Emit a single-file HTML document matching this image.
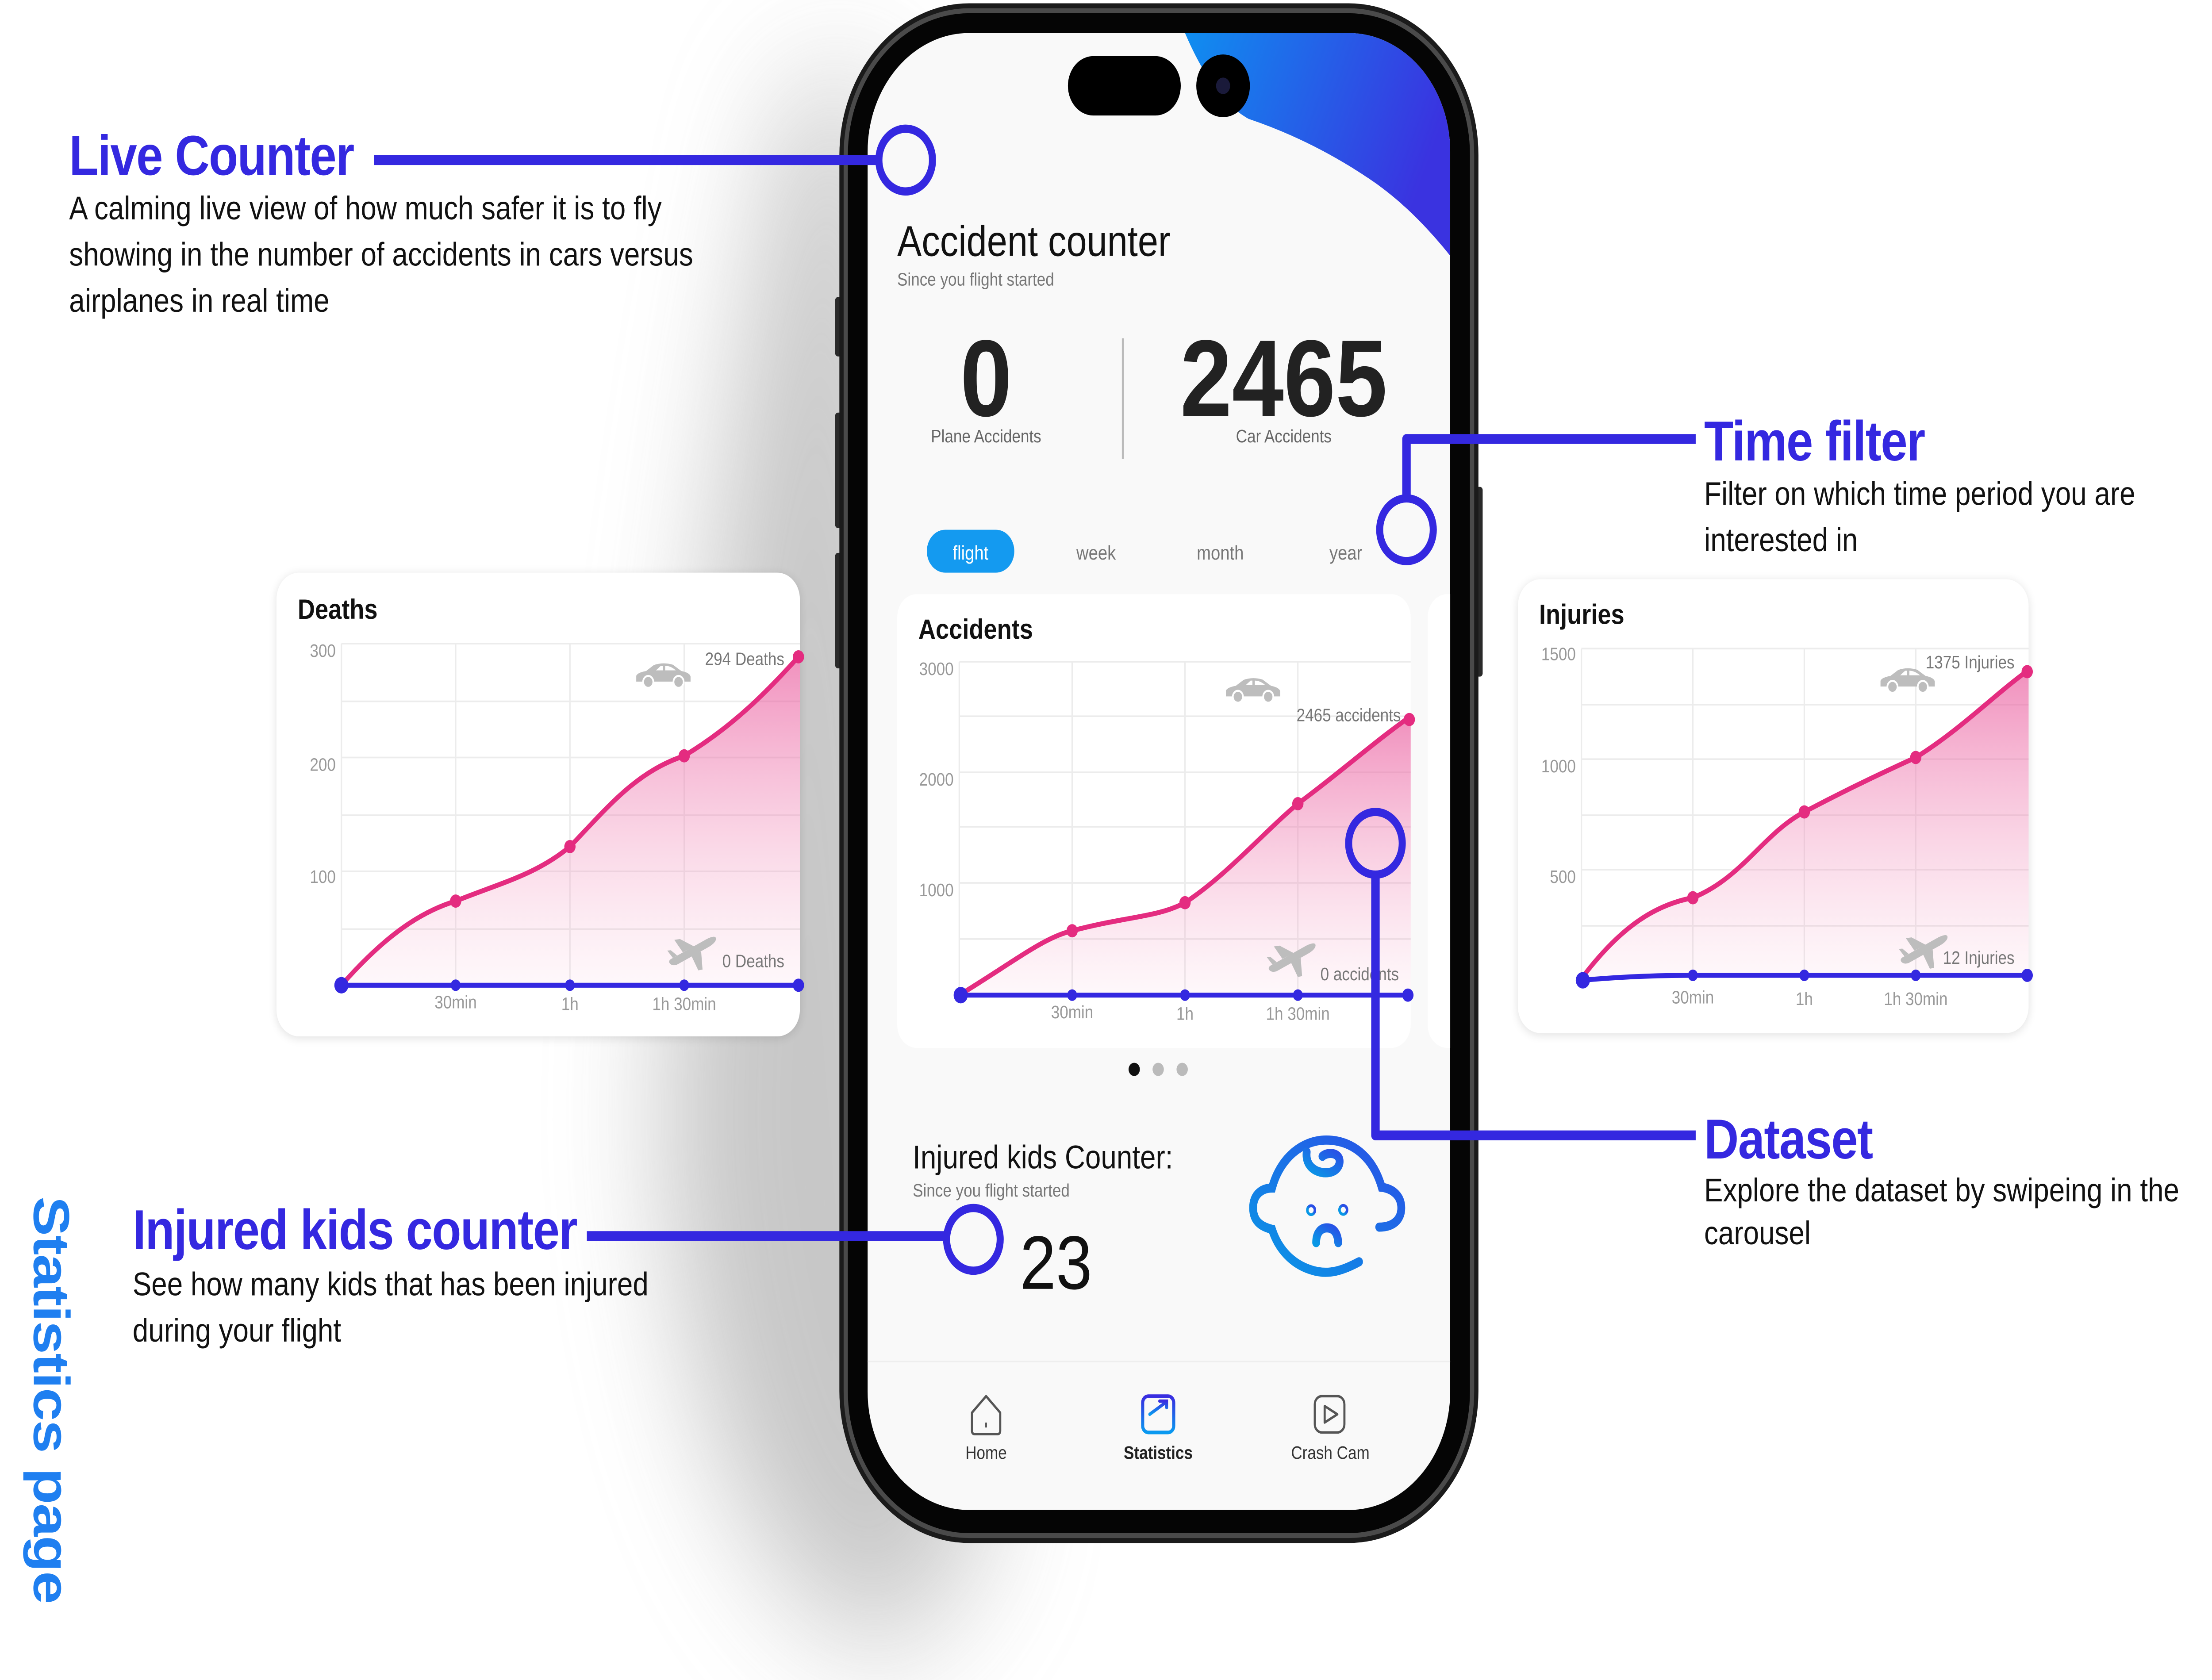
<!DOCTYPE html>
<html><head><meta charset="utf-8"><style>
html,body{margin:0;padding:0;background:#fff;width:100%;height:100%;overflow:hidden;}
svg{display:block;width:100vw;height:100vh;}
text{font-family:"Liberation Sans",sans-serif;}
</style></head><body>
<svg viewBox="0 0 1568 1018" preserveAspectRatio="none" xmlns="http://www.w3.org/2000/svg">
<defs>
  <linearGradient id="pink" x1="0" y1="0" x2="0" y2="1">
    <stop offset="0" stop-color="#e9559a" stop-opacity="0.65"/>
    <stop offset="1" stop-color="#f5a8c8" stop-opacity="0.08"/>
  </linearGradient>
  <linearGradient id="wave" x1="0" y1="0" x2="1" y2="0.3">
    <stop offset="0" stop-color="#0f8ef0"/>
    <stop offset="1" stop-color="#3a33e0"/>
  </linearGradient>
  <linearGradient id="baby" x1="1" y1="0" x2="0" y2="1">
    <stop offset="0" stop-color="#2a4fe6"/>
    <stop offset="1" stop-color="#0998e6"/>
  </linearGradient>
  <linearGradient id="stat" x1="0" y1="0" x2="0" y2="1">
    <stop offset="0" stop-color="#3a2de0"/>
    <stop offset="1" stop-color="#0a9af0"/>
  </linearGradient>
  <filter id="sh" x="-20%" y="-20%" width="140%" height="140%"><feGaussianBlur stdDeviation="3"/></filter>
  <filter id="bigsh" x="-50%" y="-20%" width="200%" height="140%"><feGaussianBlur stdDeviation="40"/></filter>
  <clipPath id="scr"><rect x="615" y="20" width="413" height="895" rx="72"/></clipPath>
  <g id="car">
    <path d="M1 12 L1 8.5 Q2 6.5 8 5.6 L13.5 2 Q20 0 27 1.8 L33 5.6 Q39 6.6 39.5 9 L39.5 12 Z" fill="#bdbdbd"/>
    <path d="M15 5.2 L18.5 2.4 L19.8 2.4 L19.8 5.2 Z M21.5 2.4 Q25.5 2.5 29 5.2 L21.5 5.2 Z" fill="#fff"/>
    <circle cx="9.5" cy="12.2" r="3.6" fill="#bdbdbd" stroke="#fff" stroke-width="1.2"/>
    <circle cx="31" cy="12.2" r="3.6" fill="#bdbdbd" stroke="#fff" stroke-width="1.2"/>
  </g>
  <g id="plane" fill="#bdbdbd">
    <path d="M3 21 Q1 19 5 17.5 L29 6 Q35 3.5 35.5 5.5 Q36 8 30 11 L8 21.5 Q5 22.5 3 21 Z"/>
    <path d="M12 14 L6 6.5 L10 6 L20 10.5 Z"/>
    <path d="M18 16 L23 25 L26 24.5 L25 13.5 Z"/>
    <path d="M5 17.5 L1 13 L3.5 12.8 L8 16 Z"/>
  </g>
</defs>

<path d="M560 60 Q480 400 470 700 Q500 980 640 1000 L700 930 L620 40 Z" fill="#9a9a9a" opacity="0.55" filter="url(#bigsh)"/>

<rect x="592" y="180" width="6" height="36" rx="2" fill="#2a2a2a"/>
<rect x="592" y="250" width="6" height="70" rx="2" fill="#2a2a2a"/>
<rect x="592" y="335" width="6" height="70" rx="2" fill="#2a2a2a"/>
<rect x="1045" y="295" width="6" height="115" rx="2" fill="#2a2a2a"/>
<rect x="595" y="2" width="453" height="933" rx="92" fill="#1b1b1b"/>
<rect x="598" y="5" width="447" height="927" rx="89" fill="#4a4a4a"/>
<rect x="601" y="8" width="441" height="921" rx="86" fill="#050505"/>

<g clip-path="url(#scr)">
  <rect x="615" y="20" width="413" height="895" fill="#f9f9f9"/>
  <path d="M840 20 Q860 60 885 72 Q930 85 970 108 Q1000 125 1028 155 L1028 20 Z" fill="url(#wave)"/>
</g>
<rect x="757" y="34" width="80" height="36" rx="18" fill="#000"/>
<circle cx="867" cy="52" r="19" fill="#000"/>
<circle cx="867" cy="52" r="5" fill="#1a1a3a"/>

<text x="636" y="155" font-size="26" fill="#111">Accident counter</text>
<text x="636" y="173" font-size="11" fill="#777">Since you flight started</text>
<text x="699" y="252" font-size="66" font-weight="bold" fill="#222" text-anchor="middle">0</text>
<text x="699" y="268" font-size="11" fill="#666" text-anchor="middle">Plane Accidents</text>
<line x1="796" y1="205" x2="796" y2="278" stroke="#bbb" stroke-width="1.5"/>
<text x="910" y="252" font-size="66" font-weight="bold" fill="#222" text-anchor="middle">2465</text>
<text x="910" y="268" font-size="11" fill="#666" text-anchor="middle">Car Accidents</text>

<rect x="657" y="321" width="62" height="26" rx="13" fill="#149af0"/>
<text x="688" y="339" font-size="12" fill="#fff" text-anchor="middle">flight</text>
<text x="777" y="339" font-size="12" fill="#777" text-anchor="middle">week</text>
<text x="865" y="339" font-size="12" fill="#777" text-anchor="middle">month</text>
<text x="954" y="339" font-size="12" fill="#777" text-anchor="middle">year</text>

<rect x="1012" y="360" width="30" height="275" rx="14" fill="#fff" clip-path="url(#scr)"/>
<rect x="636" y="360" width="364" height="275" rx="14" fill="#fff"/>
<text x="651" y="387" font-size="17" font-weight="bold" fill="#111">Accidents</text>
<g stroke="#ececec" stroke-width="1">
  <line x1="680" y1="401" x2="1000" y2="401"/><line x1="680" y1="434" x2="1000" y2="434"/>
  <line x1="680" y1="468" x2="1000" y2="468"/><line x1="680" y1="501" x2="1000" y2="501"/>
  <line x1="680" y1="535" x2="1000" y2="535"/><line x1="680" y1="569" x2="1000" y2="569"/>
  <line x1="680" y1="401" x2="680" y2="603"/><line x1="760" y1="401" x2="760" y2="603"/>
  <line x1="840" y1="401" x2="840" y2="603"/><line x1="920" y1="401" x2="920" y2="603"/>
</g>
<g font-size="11" fill="#999" text-anchor="end">
  <text x="676" y="409">3000</text><text x="676" y="476">2000</text><text x="676" y="543">1000</text>
</g>
<path d="M680 603 C720 582 740 568 760 564 C800 555 820 556 840 547 C870 530 895 505 920 487 C950 468 975 449 1000 434 L1000 603 Z" fill="url(#pink)"/>
<path d="M680 603 C720 582 740 568 760 564 C800 555 820 556 840 547 C870 530 895 505 920 487 C950 468 975 449 1000 434" fill="none" stroke="#e42c80" stroke-width="3"/>
<g fill="#e42c80"><circle cx="760" cy="564" r="4"/><circle cx="840" cy="547" r="4"/><circle cx="920" cy="487" r="4"/><circle cx="999" cy="436" r="4"/></g>
<line x1="680" y1="603" x2="1000" y2="603" stroke="#3428e0" stroke-width="3"/>
<g fill="#3428e0"><circle cx="681" cy="603" r="5"/><circle cx="760" cy="603" r="3.5"/><circle cx="840" cy="603" r="3.5"/><circle cx="920" cy="603" r="3.5"/><circle cx="998" cy="603" r="4"/></g>
<g font-size="11" fill="#999" text-anchor="middle"><text x="760" y="617">30min</text><text x="840" y="618">1h</text><text x="920" y="618">1h 30min</text></g>
<use href="#car" x="868" y="410"/>
<text x="993" y="437" font-size="11" fill="#777" text-anchor="end">2465 accidents</text>
<use href="#plane" x="897" y="567"/>
<text x="936" y="594" font-size="11" fill="#777">0 accidents</text>

<circle cx="804" cy="648" r="4" fill="#111"/><circle cx="821" cy="648" r="4" fill="#bbb"/><circle cx="838" cy="648" r="4" fill="#bbb"/>

<text x="647" y="708" font-size="20" fill="#111">Injured kids Counter:</text>
<text x="647" y="725" font-size="11" fill="#777">Since you flight started</text>
<text x="723" y="781" font-size="46" fill="#111">23</text>

<g transform="translate(884.7 681) scale(0.0894)" fill="none" stroke="url(#baby)" stroke-width="62" stroke-linecap="round">
  <path d="M880 935 C760 990 640 1030 500 990 C350 950 240 850 190 715 C120 700 40 670 40 570 C40 470 120 435 190 435 C250 240 420 110 620 110 C820 110 990 220 1060 430 C1150 440 1215 490 1215 570 C1215 650 1150 700 1040 700"/>
  <path d="M465 190 C450 300 560 340 640 330 C710 320 740 270 720 230 C695 190 620 195 590 220"/>
  <path d="M540 805 C540 730 585 705 625 705 C670 705 710 730 715 805"/>
  <circle cx="500" cy="585" r="10" stroke-width="60"/><circle cx="755" cy="583" r="10" stroke-width="60"/>
</g>

<line x1="615" y1="825" x2="1028" y2="825" stroke="#eee" stroke-width="1"/>
<path d="M689 856 L699 846 L709 856 L709 867 Q709 869 707 869 L691 869 Q689 869 689 867 Z" fill="none" stroke="#555" stroke-width="1.5" stroke-linejoin="round"/>
<line x1="699" y1="862" x2="699" y2="865" stroke="#555" stroke-width="1.2"/>
<rect x="810" y="846" width="22" height="22" rx="4" fill="none" stroke="url(#stat)" stroke-width="2.2"/>
<g stroke="url(#stat)" stroke-width="2" fill="none" stroke-linecap="round">
  <line x1="815" y1="864" x2="815" y2="861"/><line x1="819" y1="864" x2="819" y2="858"/><line x1="823" y1="864" x2="823" y2="856"/><line x1="827" y1="864" x2="827" y2="853"/>
  <path d="M815 857 L826 850 M822 849 L827 849 L827 853"/>
</g>
<rect x="932" y="846" width="21" height="22" rx="5" fill="none" stroke="#555" stroke-width="1.5"/>
<path d="M939 852 L948 857 L939 862 Z" fill="none" stroke="#555" stroke-width="1.5" stroke-linejoin="round"/>
<text x="699" y="884" font-size="11" fill="#333" text-anchor="middle">Home</text>
<text x="821" y="884" font-size="11" font-weight="bold" fill="#222" text-anchor="middle">Statistics</text>
<text x="943" y="884" font-size="11" fill="#333" text-anchor="middle">Crash Cam</text>

<rect x="196" y="348" width="371" height="281" rx="16" fill="#000" opacity="0.12" filter="url(#sh)"/>
<rect x="196" y="347" width="371" height="281" rx="16" fill="#fff"/>
<text x="211" y="375" font-size="17" font-weight="bold" fill="#111">Deaths</text>
<g stroke="#ececec" stroke-width="1">
  <line x1="242" y1="390" x2="567" y2="390"/><line x1="242" y1="425" x2="567" y2="425"/>
  <line x1="242" y1="459" x2="567" y2="459"/><line x1="242" y1="494" x2="567" y2="494"/>
  <line x1="242" y1="528" x2="567" y2="528"/><line x1="242" y1="563" x2="567" y2="563"/>
  <line x1="242" y1="390" x2="242" y2="597"/><line x1="323" y1="390" x2="323" y2="597"/>
  <line x1="404" y1="390" x2="404" y2="597"/><line x1="485" y1="390" x2="485" y2="597"/>
</g>
<g font-size="11" fill="#999" text-anchor="end"><text x="238" y="398">300</text><text x="238" y="467">200</text><text x="238" y="535">100</text></g>
<path d="M242 597 C275 565 300 552 323 546 C355 535 380 530 404 513 C430 490 450 468 485 458 C520 440 545 418 567 397 L567 597 Z" fill="url(#pink)"/>
<path d="M242 597 C275 565 300 552 323 546 C355 535 380 530 404 513 C430 490 450 468 485 458 C520 440 545 418 567 397" fill="none" stroke="#e42c80" stroke-width="3"/>
<g fill="#e42c80"><circle cx="323" cy="546" r="4"/><circle cx="404" cy="513" r="4"/><circle cx="485" cy="458" r="4"/><circle cx="566" cy="398" r="4"/></g>
<line x1="242" y1="597" x2="567" y2="597" stroke="#3428e0" stroke-width="3"/>
<g fill="#3428e0"><circle cx="242" cy="597" r="5"/><circle cx="323" cy="597" r="3.5"/><circle cx="404" cy="597" r="3.5"/><circle cx="485" cy="597" r="3.5"/><circle cx="566" cy="597" r="4"/></g>
<g font-size="11" fill="#999" text-anchor="middle"><text x="323" y="611">30min</text><text x="404" y="612">1h</text><text x="485" y="612">1h 30min</text></g>
<use href="#car" x="450" y="401"/>
<text x="556" y="403" font-size="11" fill="#777" text-anchor="end">294 Deaths</text>
<use href="#plane" x="472" y="563"/>
<text x="556" y="586" font-size="11" fill="#777" text-anchor="end">0 Deaths</text>

<rect x="1076" y="352" width="362" height="275" rx="16" fill="#000" opacity="0.12" filter="url(#sh)"/>
<rect x="1076" y="351" width="362" height="275" rx="16" fill="#fff"/>
<text x="1091" y="378" font-size="17" font-weight="bold" fill="#111">Injuries</text>
<g stroke="#ececec" stroke-width="1">
  <line x1="1121" y1="393" x2="1438" y2="393"/><line x1="1121" y1="427" x2="1438" y2="427"/>
  <line x1="1121" y1="460" x2="1438" y2="460"/><line x1="1121" y1="494" x2="1438" y2="494"/>
  <line x1="1121" y1="527" x2="1438" y2="527"/><line x1="1121" y1="561" x2="1438" y2="561"/>
  <line x1="1121" y1="393" x2="1121" y2="594"/><line x1="1200" y1="393" x2="1200" y2="594"/>
  <line x1="1279" y1="393" x2="1279" y2="594"/><line x1="1358" y1="393" x2="1358" y2="594"/>
</g>
<g font-size="11" fill="#999" text-anchor="end"><text x="1117" y="400">1500</text><text x="1117" y="468">1000</text><text x="1117" y="535">500</text></g>
<path d="M1121 593 C1150 560 1175 548 1200 544 C1235 532 1250 505 1279 492 C1310 478 1335 468 1358 459 C1390 442 1415 420 1438 406 L1438 592 Z" fill="url(#pink)"/>
<path d="M1121 593 C1150 560 1175 548 1200 544 C1235 532 1250 505 1279 492 C1310 478 1335 468 1358 459 C1390 442 1415 420 1438 406" fill="none" stroke="#e42c80" stroke-width="3"/>
<g fill="#e42c80"><circle cx="1200" cy="544" r="4"/><circle cx="1279" cy="492" r="4"/><circle cx="1358" cy="459" r="4"/><circle cx="1437" cy="407" r="4"/></g>
<path d="M1121 594 Q1160 591 1200 591 L1438 591" fill="none" stroke="#3428e0" stroke-width="3"/>
<g fill="#3428e0"><circle cx="1122" cy="594" r="5"/><circle cx="1200" cy="591" r="3.5"/><circle cx="1279" cy="591" r="3.5"/><circle cx="1358" cy="591" r="3.5"/><circle cx="1437" cy="591" r="4"/></g>
<g font-size="11" fill="#999" text-anchor="middle"><text x="1200" y="608">30min</text><text x="1279" y="609">1h</text><text x="1358" y="609">1h 30min</text></g>
<use href="#car" x="1332" y="404"/>
<text x="1428" y="405" font-size="11" fill="#777" text-anchor="end">1375 Injuries</text>
<use href="#plane" x="1345" y="562"/>
<text x="1428" y="584" font-size="11" fill="#777" text-anchor="end">12 Injuries</text>

<g stroke="#3428e0" stroke-width="6" fill="none" stroke-linejoin="round">
  <line x1="265" y1="97" x2="622" y2="97"/>
  <path d="M1202 266 L997 266 L997 301"/>
  <path d="M1202 688 L975 688 L975 531"/>
  <line x1="416" y1="749" x2="671" y2="749"/>
</g>
<g stroke="#3428e0" stroke-width="5" fill="none">
  <circle cx="642" cy="97" r="19"/>
  <circle cx="997" cy="321" r="19"/>
  <circle cx="975" cy="511" r="19"/>
  <circle cx="690" cy="751" r="19"/>
</g>

<g fill="#3428e0" font-weight="bold" font-size="34">
  <text x="49" y="106" letter-spacing="-0.5">Live Counter</text>
  <text x="1208" y="279" letter-spacing="-0.5">Time filter</text>
  <text x="1208" y="702" letter-spacing="-0.5">Dataset</text>
  <text x="94" y="757" letter-spacing="-0.5">Injured kids counter</text>
</g>
<g fill="#111" font-size="20">
  <text x="49" y="133">A calming live view of how much safer it is to fly</text>
  <text x="49" y="161">showing in the number of accidents in cars versus</text>
  <text x="49" y="189">airplanes in real time</text>
  <text x="1208" y="306">Filter on which time period you are</text>
  <text x="1208" y="334">interested in</text>
  <text x="1208" y="728">Explore the dataset by swipeing in the</text>
  <text x="1208" y="754">carousel</text>
  <text x="94" y="785">See how many kids that has been injured</text>
  <text x="94" y="813">during your flight</text>
</g>
<text transform="translate(24 725) rotate(90)" font-size="36" font-weight="bold" fill="#1f7ff0" letter-spacing="-0.5">Statistics page</text>
</svg>
</body></html>
